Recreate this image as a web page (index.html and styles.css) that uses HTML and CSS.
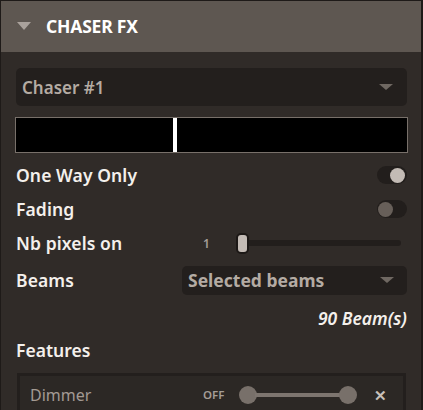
FILE: index.html
```html
<!DOCTYPE html>
<html>
<head>
<meta charset="utf-8">
<link rel="stylesheet" href="styles.css">
</head>
<body>
<div class="panel">
  <div class="header">
    <span class="caret"></span>
    <span class="title">CHASER FX</span>
  </div>
  <div class="content">
    <div class="select big">
      <span>Chaser #1</span>
      <span class="arrow"></span>
    </div>
    <div class="preview"><div class="marker"></div></div>
    <div class="row">
      <span class="label">One Way Only</span>
      <span class="toggle on"><span class="knob"></span></span>
    </div>
    <div class="row">
      <span class="label">Fading</span>
      <span class="toggle"><span class="knob"></span></span>
    </div>
    <div class="row">
      <span class="label col">Nb pixels on</span>
      <span class="value">1</span>
      <div class="slider"><span class="handle"></span><span class="track"></span></div>
    </div>
    <div class="row beams">
      <span class="label col">Beams</span>
      <div class="select small">
        <span>Selected beams</span>
        <span class="arrow"></span>
      </div>
    </div>
    <div class="count">90 Beam(s)</div>
    <div class="features">Features</div>
    <div class="feature">
      <span class="fname">Dimmer</span>
      <span class="off">OFF</span>
      <div class="range"><span class="dot"></span><span class="line"></span><span class="dot"></span></div>
      <span class="close">✕</span>
    </div>
  </div>
</div>
</body>
</html>
```

FILE: styles.css
```css
html, body {
  margin: 0;
  padding: 0;
  background: #1e1a18;
  font-family: "Noto Sans", "Open Sans", sans-serif;
  height: 410px;
  overflow: hidden;
}
.panel {
  margin: 1px 2px 0 1px;
  background: #302b28;
  height: 409px;
  overflow: hidden;
}
.header {
  height: 51px;
  background: #5e5751;
  display: flex;
  align-items: center;
  padding-left: 16px;
  box-sizing: border-box;
}
.caret {
  width: 0;
  height: 0;
  border-left: 7.5px solid transparent;
  border-right: 7.5px solid transparent;
  border-top: 8px solid #aaa29c;
  margin-right: 15px;
  margin-top: -1px;
}
.title {
  color: #ffffff;
  font-weight: 700;
  font-size: 17.5px;
  letter-spacing: -0.2px;
  margin-top: -1px;
}
.content {
  padding: 16px 14px 0 15px;
  display: flex;
  flex-direction: column;
}
.select {
  background: #231f1d;
  border-radius: 5px;
  display: flex;
  align-items: center;
  justify-content: space-between;
  color: #b4aba3;
  font-weight: 600;
  box-sizing: border-box;
}
.select.big {
  height: 38px;
  padding: 0 14px 0 6px;
  font-size: 17px;
}
.select.small {
  height: 29px;
  width: 225px;
  padding: 0 13px 0 6px;
  font-size: 17.5px;
  font-weight: 700;
}
.arrow {
  width: 0;
  height: 0;
  border-left: 7px solid transparent;
  border-right: 7px solid transparent;
  border-top: 6px solid #6f6862;
}
.preview {
  margin-top: 11px;
  height: 36px;
  border: 1px solid #78706a;
  background: #000;
  box-sizing: border-box;
  margin-left: -1px;
  margin-right: -1px;
  position: relative;
}
.marker {
  position: absolute;
  left: 157px;
  top: 0;
  width: 4px;
  height: 100%;
  background: #fff;
}
.row {
  height: 34px;
  display: flex;
  align-items: center;
  justify-content: space-between;
}
.preview + .row { margin-top: 5px; }
.label {
  color: #f4f0ec;
  font-weight: 600;
  font-size: 17.5px;
  letter-spacing: 0.1px;
}
.label.col {
  width: 166px;
  flex: none;
}
.toggle {
  width: 30px;
  height: 18px;
  border-radius: 9px;
  background: #221e1c;
  display: flex;
  align-items: center;
  padding: 0 2px 0 1px;
  box-sizing: border-box;
}
.toggle .knob {
  width: 15px;
  height: 15px;
  border-radius: 50%;
  background: #675f59;
}
.toggle.on { justify-content: flex-end; }
.toggle.on .knob { background: #c3bbb5; }
.value {
  color: #a59d97;
  font-size: 12px;
  font-weight: 600;
  width: 54px;
  padding-left: 21px;
  box-sizing: border-box;
  flex: none;
}
.slider {
  flex: 1;
  display: flex;
  align-items: center;
  margin-right: 6px;
}
.handle {
  width: 9px;
  height: 17px;
  border-radius: 5px;
  background: #c3bbb5;
  border: 2px solid #1c1816;
  flex: none;
  position: relative;
  z-index: 1;
}
.track {
  flex: 1;
  height: 6px;
  background: #221e1c;
  border-radius: 3px;
  margin-left: -3px;
}
.row.beams {
  height: 40px;
  justify-content: flex-start;
}
.count {
  text-align: right;
  color: #f4f0ec;
  font-style: italic;
  font-weight: 600;
  font-size: 17.5px;
  height: 20px;
  line-height: 20px;
  margin-top: 8px;
}
.features {
  color: #f4f0ec;
  font-weight: 600;
  font-size: 17.5px;
  height: 24px;
  line-height: 24px;
  margin-top: 10px;
}
.feature {
  margin-top: 11px;
  margin-right: 1px;
  margin-left: 1px;
  height: 50px;
  border: 3px solid #231f1d;
  border-bottom: none;
  background: #2c2825;
  display: flex;
  align-items: center;
  box-sizing: border-box;
  padding-bottom: 10px;
}
.fname {
  color: #a39a93;
  font-size: 16px;
  width: 183px;
  padding-left: 10px;
  flex: none;
  box-sizing: border-box;
}
.off {
  color: #a59d97;
  font-size: 11.5px;
  font-weight: 600;
  width: 36px;
  flex: none;
}
.range {
  display: flex;
  align-items: center;
  width: 118px;
}
.dot {
  width: 18px;
  height: 18px;
  border-radius: 50%;
  background: #78706a;
  flex: none;
}
.line {
  flex: 1;
  height: 4px;
  background: #7d756f;
  margin: 0 -2px;
}
.close {
  color: #c8c0ba;
  font-size: 15px;
  font-weight: 700;
  margin-left: 17px;
}
```
